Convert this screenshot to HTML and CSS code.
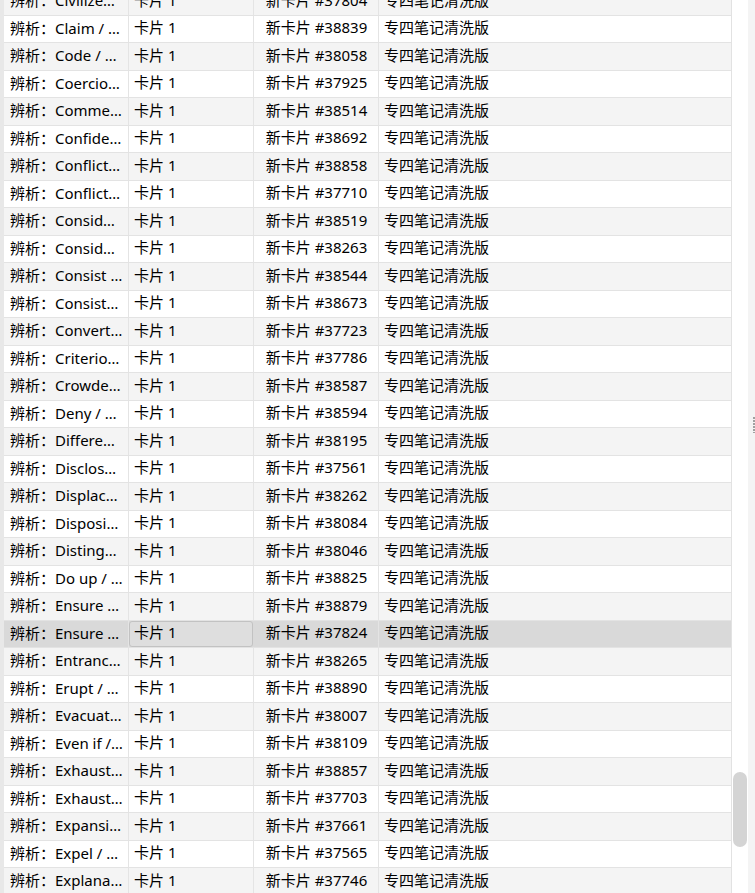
FILE: index.html
```html
<!DOCTYPE html>
<html lang="zh-CN">
<head>
    <meta charset="UTF-8">
    <meta name="viewport" content="width=device-width, initial-scale=1.0">
    <title>卡片浏览</title>
    <link rel="stylesheet" href="styles.css">
</head>
<body>
    <div class="browser">
        <div class="table-pane">
            <div class="rows">
                <div class="row"><div class="cell sort">辨析：Civilized / Civil</div><div class="cell">卡片 1</div><div class="cell due">新卡片 #37804</div><div class="cell">专四笔记清洗版</div></div>
                <div class="row"><div class="cell sort">辨析：Claim / Declare</div><div class="cell">卡片 1</div><div class="cell due">新卡片 #38839</div><div class="cell">专四笔记清洗版</div></div>
                <div class="row"><div class="cell sort">辨析：Code / Cipher</div><div class="cell">卡片 1</div><div class="cell due">新卡片 #38058</div><div class="cell">专四笔记清洗版</div></div>
                <div class="row"><div class="cell sort">辨析：Coercion / Compulsion</div><div class="cell">卡片 1</div><div class="cell due">新卡片 #37925</div><div class="cell">专四笔记清洗版</div></div>
                <div class="row"><div class="cell sort">辨析：Commence / Begin</div><div class="cell">卡片 1</div><div class="cell due">新卡片 #38514</div><div class="cell">专四笔记清洗版</div></div>
                <div class="row"><div class="cell sort">辨析：Confidential / Secret</div><div class="cell">卡片 1</div><div class="cell due">新卡片 #38692</div><div class="cell">专四笔记清洗版</div></div>
                <div class="row"><div class="cell sort">辨析：Conflict / Clash</div><div class="cell">卡片 1</div><div class="cell due">新卡片 #38858</div><div class="cell">专四笔记清洗版</div></div>
                <div class="row"><div class="cell sort">辨析：Conflict / Contradiction</div><div class="cell">卡片 1</div><div class="cell due">新卡片 #37710</div><div class="cell">专四笔记清洗版</div></div>
                <div class="row"><div class="cell sort">辨析：Considerable / Considerate</div><div class="cell">卡片 1</div><div class="cell due">新卡片 #38519</div><div class="cell">专四笔记清洗版</div></div>
                <div class="row"><div class="cell sort">辨析：Consider / Regard</div><div class="cell">卡片 1</div><div class="cell due">新卡片 #38263</div><div class="cell">专四笔记清洗版</div></div>
                <div class="row"><div class="cell sort">辨析：Consist of / Comprise</div><div class="cell">卡片 1</div><div class="cell due">新卡片 #38544</div><div class="cell">专四笔记清洗版</div></div>
                <div class="row"><div class="cell sort">辨析：Consistent / Constant</div><div class="cell">卡片 1</div><div class="cell due">新卡片 #38673</div><div class="cell">专四笔记清洗版</div></div>
                <div class="row"><div class="cell sort">辨析：Convert / Transform</div><div class="cell">卡片 1</div><div class="cell due">新卡片 #37723</div><div class="cell">专四笔记清洗版</div></div>
                <div class="row"><div class="cell sort">辨析：Criterion / Standard</div><div class="cell">卡片 1</div><div class="cell due">新卡片 #37786</div><div class="cell">专四笔记清洗版</div></div>
                <div class="row"><div class="cell sort">辨析：Crowded / Packed</div><div class="cell">卡片 1</div><div class="cell due">新卡片 #38587</div><div class="cell">专四笔记清洗版</div></div>
                <div class="row"><div class="cell sort">辨析：Deny / Refuse</div><div class="cell">卡片 1</div><div class="cell due">新卡片 #38594</div><div class="cell">专四笔记清洗版</div></div>
                <div class="row"><div class="cell sort">辨析：Difference / Distinction</div><div class="cell">卡片 1</div><div class="cell due">新卡片 #38195</div><div class="cell">专四笔记清洗版</div></div>
                <div class="row"><div class="cell sort">辨析：Disclose / Reveal</div><div class="cell">卡片 1</div><div class="cell due">新卡片 #37561</div><div class="cell">专四笔记清洗版</div></div>
                <div class="row"><div class="cell sort">辨析：Displace / Replace</div><div class="cell">卡片 1</div><div class="cell due">新卡片 #38262</div><div class="cell">专四笔记清洗版</div></div>
                <div class="row"><div class="cell sort">辨析：Disposition / Disposal</div><div class="cell">卡片 1</div><div class="cell due">新卡片 #38084</div><div class="cell">专四笔记清洗版</div></div>
                <div class="row"><div class="cell sort">辨析：Distinguish / Differentiate</div><div class="cell">卡片 1</div><div class="cell due">新卡片 #38046</div><div class="cell">专四笔记清洗版</div></div>
                <div class="row"><div class="cell sort">辨析：Do up / Fasten</div><div class="cell">卡片 1</div><div class="cell due">新卡片 #38825</div><div class="cell">专四笔记清洗版</div></div>
                <div class="row"><div class="cell sort">辨析：Ensure / Insure</div><div class="cell">卡片 1</div><div class="cell due">新卡片 #38879</div><div class="cell">专四笔记清洗版</div></div>
                <div class="row selected"><div class="cell sort">辨析：Ensure / Assure</div><div class="cell focused">卡片 1</div><div class="cell due">新卡片 #37824</div><div class="cell">专四笔记清洗版</div></div>
                <div class="row"><div class="cell sort">辨析：Entrance / Entry</div><div class="cell">卡片 1</div><div class="cell due">新卡片 #38265</div><div class="cell">专四笔记清洗版</div></div>
                <div class="row"><div class="cell sort">辨析：Erupt / Burst</div><div class="cell">卡片 1</div><div class="cell due">新卡片 #38890</div><div class="cell">专四笔记清洗版</div></div>
                <div class="row"><div class="cell sort">辨析：Evacuate / Vacate</div><div class="cell">卡片 1</div><div class="cell due">新卡片 #38007</div><div class="cell">专四笔记清洗版</div></div>
                <div class="row"><div class="cell sort">辨析：Even if / Even though</div><div class="cell">卡片 1</div><div class="cell due">新卡片 #38109</div><div class="cell">专四笔记清洗版</div></div>
                <div class="row"><div class="cell sort">辨析：Exhaust / Tire</div><div class="cell">卡片 1</div><div class="cell due">新卡片 #38857</div><div class="cell">专四笔记清洗版</div></div>
                <div class="row"><div class="cell sort">辨析：Exhausted / Exhaustive</div><div class="cell">卡片 1</div><div class="cell due">新卡片 #37703</div><div class="cell">专四笔记清洗版</div></div>
                <div class="row"><div class="cell sort">辨析：Expansion / Extension</div><div class="cell">卡片 1</div><div class="cell due">新卡片 #37661</div><div class="cell">专四笔记清洗版</div></div>
                <div class="row"><div class="cell sort">辨析：Expel / Dismiss</div><div class="cell">卡片 1</div><div class="cell due">新卡片 #37565</div><div class="cell">专四笔记清洗版</div></div>
                <div class="row"><div class="cell sort">辨析：Explanation / Interpretation</div><div class="cell">卡片 1</div><div class="cell due">新卡片 #37746</div><div class="cell">专四笔记清洗版</div></div>
            </div>
        </div>
        <div class="scrollbar">
            <div class="thumb"></div>
        </div>
        <div class="splitter">
            <div class="grip"></div>
        </div>
    </div>
</body>
</html>
```

FILE: styles.css
```css
html, body {
    margin: 0;
    height: 100%;
    overflow: hidden;
    background: #ffffff;
}
body {
    font-family: "Noto Sans", "Noto Sans CJK SC", sans-serif;
    font-size: 15px;
    color: #000;
}
.browser {
    display: flex;
    height: 100%;
}
.table-pane {
    width: 727px;
    border-left: 4px solid #e8e8e8;
    border-right: 1px solid #e2e2e2;
    overflow: hidden;
}
/* list is scrolled a little, so the first row is cut off */
.rows {
    margin-top: -12px;
}
.row {
    display: grid;
    grid-template-columns: 125px 125px 125px 1fr;
    height: 27.5px;
    box-sizing: border-box;
    border-bottom: 1px solid #e3e3e3;
    background: #f4f4f4;
}
.row:nth-child(even) {
    background: #ffffff;
}
.row.selected {
    background: #d9d9d9;
}
.cell {
    display: flex;
    align-items: center;
    min-width: 0;
    padding: 0 4px 3px 5px;
    border-right: 1px solid #e4e4e4;
    white-space: nowrap;
    overflow: hidden;
    line-height: 20px;
}
.cell:last-child {
    border-right: none;
}
.cell.sort {
    display: block;
    padding: 2px 5px 0 6px;
    text-overflow: ellipsis;
}
.cell.due {
    justify-content: center;
}
.cell.focused {
    border: 1px solid #c2c2c2;
    border-radius: 3px;
    background: #dedede;
    margin: 0 1px 0 0;
    padding-left: 4px;
}
.scrollbar {
    width: 16px;
    padding-left: 1px;
    box-sizing: border-box;
    background: #ffffff;
}
.thumb {
    width: 14px;
    height: 75px;
    margin-top: 772px;
    border-radius: 7px;
    background: #d4d4d4;
}
.splitter {
    flex: 1;
    display: flex;
    flex-direction: column;
    align-items: flex-end;
    background: #f4f4f4;
}
.grip {
    width: 2px;
    height: 16px;
    margin-top: 417px;
    background: repeating-linear-gradient(to bottom, #a0a0a0 0 2px, transparent 2px 3px);
}
```
